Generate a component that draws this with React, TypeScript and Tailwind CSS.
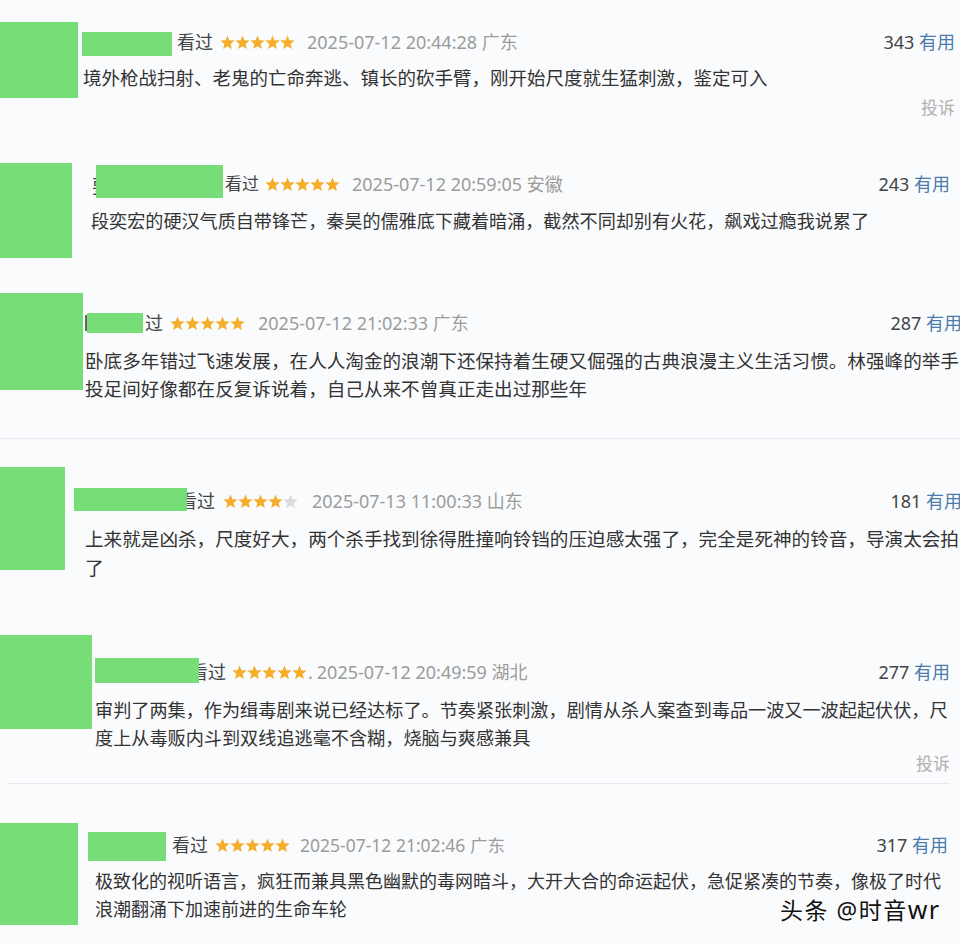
import React from "react";

const FONT = '"Noto Sans", "Noto Sans CJK SC", sans-serif';
const GREEN = "bg-[#77dd77]";

function Star({ on = true }: { on?: boolean }) {
  return (
    <svg width="15" height="15" viewBox="0 0 24 24" className="shrink-0">
      <path
        d="M12 0.6L15.06 8.39L23.41 8.89L16.95 14.21L19.05 22.31L12 17.8L4.95 22.31L7.05 14.21L0.59 8.89L8.94 8.39Z"
        fill={on ? "#f5ad2a" : "#d9d9d9"}
      />
    </svg>
  );
}

function Stars({ count = 5, className = "" }: { count?: number; className?: string }) {
  return (
    <span className={"flex shrink-0 " + className}>
      {[0, 1, 2, 3, 4].map((i) => (
        <Star key={i} on={i < count} />
      ))}
    </span>
  );
}

function Useful({ n }: { n: string }) {
  return (
    <span className="ml-auto shrink-0 whitespace-nowrap text-[18px] leading-[24px]">
      <span className="text-[#444]">{n}</span> <span className="text-[#4b7bab]">有用</span>
    </span>
  );
}

export default function App() {
  return (
    <div className="flex h-[944px] w-[960px] flex-col overflow-hidden bg-[#fafbfd]" style={{ fontFamily: FONT }}>
      {/* Block 1 */}
      <section className="flex h-[150px] shrink-0 overflow-hidden">
        <div className={"mt-[22px] h-[76px] w-[78px] shrink-0 " + GREEN} />
        <div className="ml-[4px] flex min-w-0 flex-1 flex-col pr-[5px]">
          <div className="mt-[30px] flex items-start">
            <div className={"mt-[2px] h-[24px] w-[90px] shrink-0 " + GREEN} />
            <div className="flex h-[24px] flex-1 items-center leading-[24px]">
              <span className="ml-[5px] text-[18px] text-[#444]">看过</span>
              <Stars className="ml-[7px]" />
              <span className="ml-[12px] whitespace-nowrap text-[18px] text-[#9b9b9b]">2025-07-12 20:44:28 广东</span>
              <Useful n="343" />
            </div>
          </div>
          <p className="ml-[1px] mt-[7px] whitespace-nowrap text-[18.5px] leading-[30px] text-[#333]">
            境外枪战扫射、老鬼的亡命奔逃、镇长的砍手臂，刚开始尺度就生猛刺激，鉴定可入
          </p>
          <span className="mt-[3px] self-end text-[17px] leading-[24px] text-[#b0b0b0]">投诉</span>
        </div>
      </section>

      {/* Block 2 */}
      <section className="flex h-[133px] shrink-0 overflow-hidden">
        <div className={"mt-[13px] h-[95px] w-[72px] shrink-0 " + GREEN} />
        <div className="ml-[18px] flex min-w-0 flex-1 flex-col pr-[10px]">
          <div className="mt-[15px] flex items-start">
            <span className="ml-[2px] mt-[9px] w-[4px] shrink-0 overflow-hidden text-[18px] leading-[24px] text-[#444]">要</span>
            <div className={"h-[33px] w-[127px] shrink-0 " + GREEN} />
            <div className="mt-[7px] flex h-[24px] flex-1 items-center leading-[24px]">
              <span className="ml-[2px] text-[17px] text-[#444]">看过</span>
              <Stars className="ml-[6px]" />
              <span className="ml-[12px] whitespace-nowrap text-[18px] text-[#9b9b9b]">2025-07-12 20:59:05 安徽</span>
              <Useful n="243" />
            </div>
          </div>
          <p className="ml-[1px] mt-[8px] whitespace-nowrap text-[18.1px] leading-[30px] text-[#333]">
            段奕宏的硬汉气质自带锋芒，秦昊的儒雅底下藏着暗涌，截然不同却别有火花，飙戏过瘾我说累了
          </p>
        </div>
      </section>

      {/* Block 3 */}
      <section className="flex h-[156px] shrink-0 overflow-hidden border-b border-[#e6e8eb]">
        <div className={"mt-[10px] h-[97px] w-[83px] shrink-0 " + GREEN} />
        <div className="ml-[2px] mr-[-2px] flex min-w-0 flex-1 flex-col">
          <div className="mt-[28px] flex items-start">
            <span className="mt-[4px] h-[16px] w-[2px] shrink-0 bg-[#666]" />
            <div className={"mt-[2px] h-[20px] w-[56px] shrink-0 " + GREEN} />
            <div className="flex h-[24px] flex-1 items-center leading-[24px]">
              <span className="ml-[2px] text-[18px] text-[#444]">过</span>
              <Stars className="ml-[7px]" />
              <span className="ml-[13px] whitespace-nowrap text-[18px] text-[#9b9b9b]">2025-07-12 21:02:33 广东</span>
              <Useful n="287" />
            </div>
          </div>
          <div className="mt-[12px] whitespace-nowrap text-[18.6px] leading-[28px] text-[#333]">
            <p>卧底多年错过飞速发展，在人人淘金的浪潮下还保持着生硬又倔强的古典浪漫主义生活习惯。林强峰的举手</p>
            <p>投足间好像都在反复诉说着，自己从来不曾真正走出过那些年</p>
          </div>
        </div>
      </section>

      {/* Block 4 */}
      <section className="flex h-[181px] shrink-0 overflow-hidden">
        <div className={"mt-[28px] h-[103px] w-[65px] shrink-0 " + GREEN} />
        <div className="ml-[9px] mr-[-2px] flex min-w-0 flex-1 flex-col">
          <div className="mt-[49px] flex items-start">
            <div className={"relative z-10 mr-[-8px] h-[23px] w-[113px] shrink-0 " + GREEN} />
            <div className="mt-[1px] flex h-[24px] flex-1 items-center leading-[24px]">
              <span className="text-[18px] text-[#444]">看过</span>
              <Stars count={4} className="ml-[8px]" />
              <span className="ml-[14px] whitespace-nowrap text-[18px] text-[#9b9b9b]">2025-07-13 11:00:33 山东</span>
              <Useful n="181" />
            </div>
          </div>
          <div className="ml-[11px] mt-[11px] whitespace-nowrap text-[18.6px] leading-[29px] text-[#333]">
            <p>上来就是凶杀，尺度好大，两个杀手找到徐得胜撞响铃铛的压迫感太强了，完全是死神的铃音，导演太会拍</p>
            <p>了</p>
          </div>
        </div>
      </section>

      {/* Block 5 */}
      <section className="flex h-[164px] shrink-0 flex-col overflow-hidden">
        <div className="flex flex-1">
          <div className={"mt-[15px] h-[94px] w-[92px] shrink-0 " + GREEN} />
          <div className="ml-[3px] flex min-w-0 flex-1 flex-col pr-[10px]">
            <div className="mt-[38px] flex items-start">
              <div className={"relative z-10 mr-[-9px] h-[25px] w-[104px] shrink-0 " + GREEN} />
              <div className="mt-[2px] flex h-[24px] flex-1 items-center leading-[24px]">
                <span className="text-[18px] text-[#444]">看过</span>
                <Stars className="ml-[6px]" />
                <span className="ml-[1px] text-[18px] text-[#9b9b9b]">.</span>
                <span className="ml-[4px] whitespace-nowrap text-[18px] text-[#9b9b9b]">2025-07-12 20:49:59 湖北</span>
                <Useful n="277" />
              </div>
            </div>
            <div className="mt-[12px] whitespace-nowrap text-[18.15px] leading-[28px] text-[#333]">
              <p>审判了两集，作为缉毒剧来说已经达标了。节奏紧张刺激，剧情从杀人案查到毒品一波又一波起起伏伏，尺</p>
              <p>度上从毒贩内斗到双线追逃毫不含糊，烧脑与爽感兼具</p>
            </div>
            <span className="self-end text-[17px] leading-[24px] text-[#b0b0b0]">投诉</span>
          </div>
        </div>
        <div className="ml-[7px] mr-[10px] h-px shrink-0 bg-[#e6e8eb]" />
      </section>

      {/* Block 6 */}
      <section className="relative flex h-[160px] shrink-0 overflow-hidden">
        <div className={"mt-[39px] h-[102px] w-[78px] shrink-0 " + GREEN} />
        <div className="ml-[10px] flex min-w-0 flex-1 flex-col pr-[12px]">
          <div className="mt-[48px] flex items-start">
            <div className={"h-[29px] w-[78px] shrink-0 " + GREEN} />
            <div className="mt-[1px] flex h-[24px] flex-1 items-center leading-[24px]">
              <span className="ml-[6px] text-[18px] text-[#444]">看过</span>
              <Stars className="ml-[7px]" />
              <span className="ml-[10px] whitespace-nowrap text-[17.5px] text-[#9b9b9b]">2025-07-12 21:02:46 广东</span>
              <Useful n="317" />
            </div>
          </div>
          <div className="ml-[7px] mt-[6px] whitespace-nowrap text-[18px] leading-[28px] text-[#333]">
            <p>极致化的视听语言，疯狂而兼具黑色幽默的毒网暗斗，大开大合的命运起伏，急促紧凑的节奏，像极了时代</p>
            <p>浪潮翻涌下加速前进的生命车轮</p>
          </div>
        </div>
        <span className="absolute left-[780px] top-[112px] whitespace-nowrap text-[23px] leading-[27px] tracking-[1.5px] text-[#111]">
          头条 @时音<span className="text-[25px]">wr</span>
        </span>
      </section>
    </div>
  );
}
